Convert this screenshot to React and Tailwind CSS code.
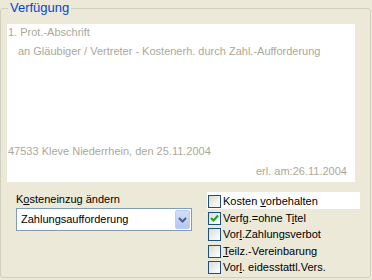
import React from "react";

function Check({ checked }) {
  return (
    <div className="relative w-[13px] h-[13px] shrink-0 border border-[#1c5180] bg-linear-to-br from-[#dcdcd7] to-white">
      {checked && (
        <svg width="11" height="11" viewBox="0 0 11 11" className="absolute left-0 top-0">
          <polyline points="2,5 4.5,7.5 9,2.5" fill="none" stroke="#21a121" strokeWidth="2" />
        </svg>
      )}
    </div>
  );
}

function Row({ children, checked, focus }) {
  return (
    <div className={"h-[16.5px] flex items-start pt-[3px] " + (focus ? "bg-white" : "")}>
      <div className="ml-[1px]">
        <Check checked={checked} />
      </div>
      <div className="ml-[2px] text-[11px] leading-[13px] text-black">{children}</div>
    </div>
  );
}

export default function App() {
  return (
    <div className="w-[372px] h-[280px] bg-[#ece9d8] font-['Liberation_Sans',Arial,sans-serif]">
      <fieldset className="w-[371px] border border-[#d0d0bf] rounded-[3px] px-[6px] pb-0">
        <legend className="ml-[1px] px-[2px] text-[13px] leading-[16px] text-[#0046d5]">Verfügung</legend>
        <div className="pt-[8px]">
          <div className="h-[158px] w-[348px] bg-white flex flex-col text-[11px] leading-[13px] text-[#aca899]">
            <div className="mt-[2px] pl-[1px]">1. Prot.-Abschrift</div>
            <div className="mt-[6px] pl-[11px]">an Gläubiger / Vertreter - Kostenerh. durch Zahl.-Aufforderung</div>
            <div className="mt-[87px] pl-[1px]">47533 Kleve Niederrhein, den 25.11.2004</div>
            <div className="mt-[7px] pl-[249px]">erl. am:26.11.2004</div>
          </div>
          <div className="h-[85px] mt-[10px] flex">
            <div className="w-[200px] pl-[9px] pt-[1px]">
              <div className="text-[11px] leading-[13px] text-black">
                K<span className="underline">o</span>steneinzug ändern
              </div>
              <div className="mt-[2px] w-[176px] h-[23px] border border-[#7f9db9] bg-white flex items-center justify-between p-[1px]">
                <div className="pl-[3px] text-[11px] leading-[13px] text-black">Zahlungsaufforderung</div>
                <div className="w-[15px] h-full rounded-[2px] border border-[#b9cdf5] bg-linear-to-b from-[#d2ddfb] to-[#b4c8f5] flex items-center justify-center">
                  <svg width="9" height="6" viewBox="0 0 9 6">
                    <polyline points="1,1 4.5,4.5 8,1" fill="none" stroke="#4d6185" strokeWidth="2" />
                  </svg>
                </div>
              </div>
            </div>
            <div className="w-[153px]">
              <Row focus>
                Kosten <span className="underline">v</span>orbehalten
              </Row>
              <Row checked>
                Verfg.=ohne T<span className="underline">i</span>tel
              </Row>
              <Row>
                Vor<span className="underline">l</span>.Zahlungsverbot
              </Row>
              <Row>
                <span className="underline">T</span>eilz.-Vereinbarung
              </Row>
              <Row>
                Vor<span className="underline">l</span>. eidesstattl.Vers.
              </Row>
            </div>
          </div>
        </div>
      </fieldset>
    </div>
  );
}
